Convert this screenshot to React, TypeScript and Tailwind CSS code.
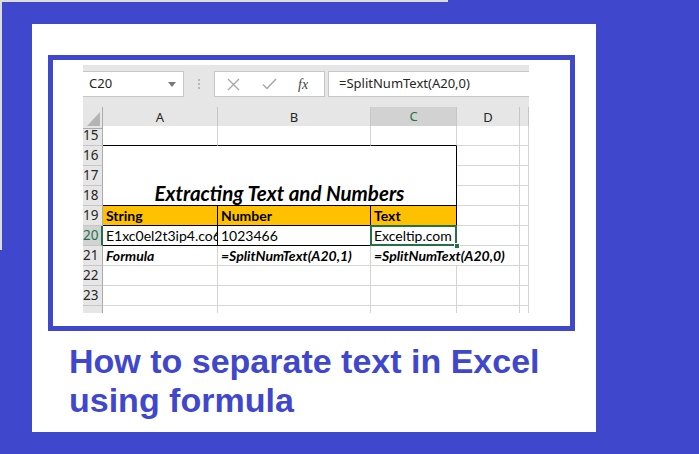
import React from 'react';

// Excel-ish grid: row header + columns A..E (E is cut off)
const gridCols = 'grid grid-cols-[20px_115px_153px_86px_63px_9px] auto-rows-[20px]';

type CellProps = { children?: React.ReactNode; className?: string };

const Cell = ({ children, className = '' }: CellProps) => (
  <div
    className={`flex items-center px-[3px] whitespace-nowrap overflow-hidden border-r border-b border-[#d4d4d4] text-[14px] text-black ${className}`}
  >
    {children}
  </div>
);

const RowHead = ({ n, active = false }: { n?: number; active?: boolean }) => (
  <div
    className={
      active
        ? 'flex items-center bg-[#d2d2d2] text-[#217346] text-[13.5px] border-b border-[#c6c6c6] border-r-2 border-r-[#217346]'
        : 'flex items-center bg-[#e6e6e6] text-[#262626] text-[13.5px] border-b border-[#c6c6c6] border-r border-r-[#ababab]'
    }
    style={{ fontFamily: '"Noto Sans", sans-serif' }}
  >
    {n}
  </div>
);

const ColHead = ({ label, active = false }: { label: string; active?: boolean }) => (
  <div
    className={
      active
        ? 'flex items-center justify-center bg-[#d2d2d2] text-[#217346] text-[13px] border-r border-[#c6c6c6] border-b-2 border-b-[#217346]'
        : 'flex items-center justify-center bg-[#e6e6e6] text-[#262626] text-[13px] border-r border-[#c6c6c6] border-b border-b-[#ababab]'
    }
  >
    {label}
  </div>
);

const Sheet: React.FC = () => (
  <div className="w-[446px] h-[248px] bg-[#e6e6e6] flex flex-col overflow-hidden" style={{ fontFamily: '"Noto Sans", sans-serif' }}>
    <div className="h-[6px] shrink-0" />

    {/* formula bar */}
    <div className="h-[26px] shrink-0 flex">
      <div className="w-[101px] h-full bg-white border border-l-0 border-[#c6c6c6] flex items-center pl-[6px] pr-[7px] text-[13px] text-[#262626]">
        <span>C20</span>
        <svg className="ml-auto" width="8" height="5" viewBox="0 0 8 5">
          <polygon points="0,0 8,0 4,5" fill="#7a7a7a" />
        </svg>
      </div>
      <div className="w-[30px] flex flex-col items-center justify-center gap-[2px]">
        <span className="w-[2px] h-[2px] bg-[#b8b8b8]" />
        <span className="w-[2px] h-[2px] bg-[#b8b8b8]" />
        <span className="w-[2px] h-[2px] bg-[#b8b8b8]" />
      </div>
      <div className="w-[111px] h-full bg-white border border-[#c6c6c6] flex items-center">
        <svg className="ml-[12px]" width="13" height="13" viewBox="0 0 13 13">
          <path d="M1 1 L12 12 M12 1 L1 12" stroke="#a6a6a6" strokeWidth="1.3" fill="none" />
        </svg>
        <svg className="ml-[22px]" width="15" height="12" viewBox="0 0 15 12">
          <path d="M1 6.5 L5 10.5 L14 1" stroke="#a6a6a6" strokeWidth="1.5" fill="none" />
        </svg>
        <span
          className="ml-[21px] text-[14px] italic text-[#444]"
          style={{ fontFamily: '"Liberation Serif", serif' }}
        >
          fx
        </span>
      </div>
      <div className="ml-[3px] flex-1 h-full bg-white border border-r-0 border-[#c6c6c6] flex items-center pl-[10px] text-[13px] text-[#262626]">
        =SplitNumText(A20,0)
      </div>
    </div>

    <div className="h-[10px] shrink-0" />

    {/* column headers */}
    <div className="grid grid-cols-[20px_115px_153px_86px_63px_9px] h-[19px] shrink-0" style={{ fontFamily: '"Noto Sans", sans-serif' }}>
      <div className="relative bg-[#e6e6e6] border-r border-b border-[#ababab]">
        <svg className="absolute right-[2px] bottom-[2px]" width="13" height="14" viewBox="0 0 13 14">
          <polygon points="13,0 13,14 0,14" fill="#b4b4b4" />
        </svg>
      </div>
      <ColHead label="A" />
      <ColHead label="B" />
      <ColHead label="C" active />
      <ColHead label="D" />
      <ColHead label="" />
    </div>

    {/* cells */}
    <div className={`${gridCols} bg-white flex-1`} style={{ fontFamily: 'Lato, "Liberation Sans", sans-serif' }}>
      <RowHead n={15} />
      <Cell className="border-b-black" />
      <Cell className="border-b-black" />
      <Cell className="border-b-black" />
      <Cell />
      <Cell />

      <RowHead n={16} />
      <div className="col-span-3 row-span-3 flex items-end justify-center border-r border-b border-black pb-[1px]">
        <span className="text-[20.5px] leading-[22px] font-bold italic text-black">Extracting Text and Numbers</span>
      </div>
      <Cell />
      <Cell />
      <RowHead n={17} />
      <Cell />
      <Cell />
      <RowHead n={18} />
      <Cell />
      <Cell />

      <RowHead n={19} />
      <Cell className="bg-[#ffc000] font-bold border-r-black border-b-black">String</Cell>
      <Cell className="bg-[#ffc000] font-bold border-r-black border-b-black">Number</Cell>
      <Cell className="bg-[#ffc000] font-bold border-r-black border-b-black">Text</Cell>
      <Cell />
      <Cell />

      <RowHead n={20} active />
      <Cell className="border-r-black border-b-black">E1xc0el2t3ip4.co66</Cell>
      <Cell className="border-b-black">1023466</Cell>
      <Cell className="relative overflow-visible border-b-black">
        Exceltip.com
        <span className="absolute -left-px -top-px -right-px -bottom-px border-2 border-[#217346] pointer-events-none" />
        <span className="absolute -right-[4px] -bottom-[4px] w-[6px] h-[6px] bg-[#217346] border border-white" />
      </Cell>
      <Cell />
      <Cell />

      <RowHead n={21} />
      <Cell className="font-bold italic">Formula</Cell>
      <Cell className="font-bold italic">=SplitNumText(A20,1)</Cell>
      <Cell className="font-bold italic overflow-visible border-r-0 relative z-10">=SplitNumText(A20,0)</Cell>
      <Cell />
      <Cell />

      {[22, 23, 0].map((n) => (
        <React.Fragment key={n}>
          <RowHead n={n || undefined} />
          <Cell />
          <Cell />
          <Cell />
          <Cell />
          <Cell />
        </React.Fragment>
      ))}
    </div>
  </div>
);

export default function App() {
  return (
    <div className="relative w-[699px] h-[454px] bg-[#3f48cc] overflow-hidden">
      {/* bits of another window peeking out at the top-left */}
      <div className="absolute left-0 top-0 w-[448px] h-[2px] bg-[#dcdcdc]" />
      <div className="absolute left-0 top-0 w-[2px] h-[250px] bg-[#dcdcdc]" />

      <div className="ml-[32px] pt-[24px]">
        <div className="w-[564px] h-[408px] bg-white pt-[31px] pl-[16px]">
          <div className="w-[527px] h-[276px] border-[5px] border-[#3f48cc] pt-[5px] pl-[30px]">
            <Sheet />
          </div>
          <p
            className="mt-[11px] pl-[21px] w-[540px] text-[34px] leading-[39px] font-bold text-[#3f48cc]"
            style={{ fontFamily: '"Liberation Sans", Arial, sans-serif' }}
          >
            How to separate text in Excel using formula
          </p>
        </div>
      </div>
    </div>
  );
}
